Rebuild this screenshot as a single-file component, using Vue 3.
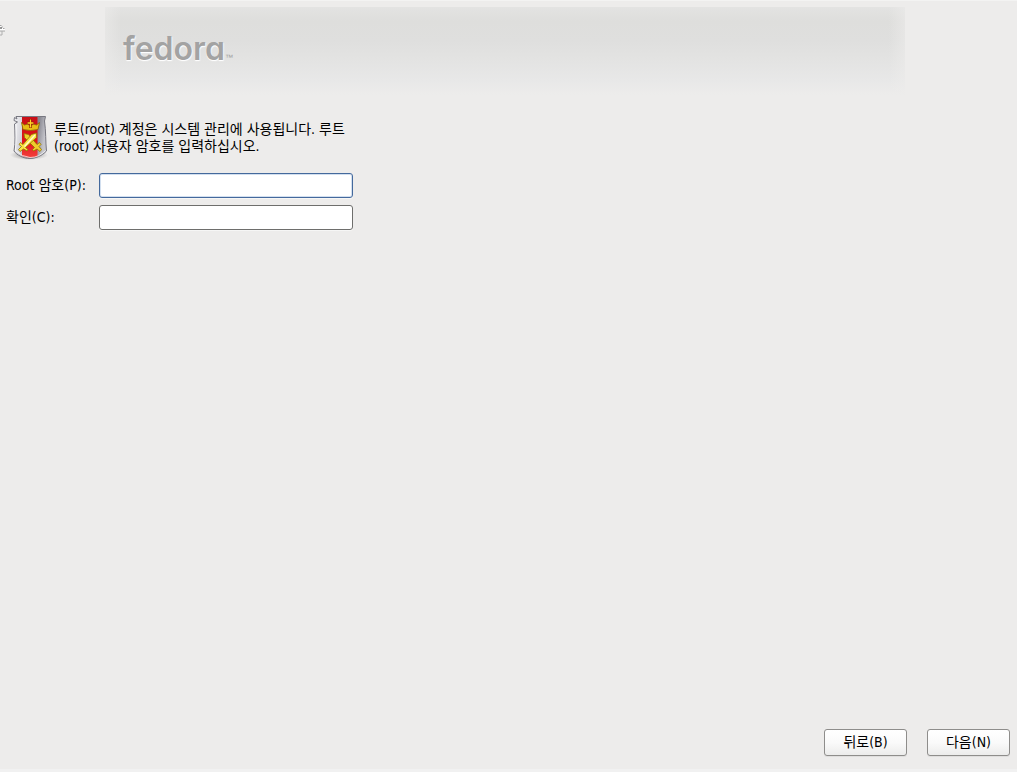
<template>
  <div class="installer">
    <svg class="pointer" width="6" height="16" viewBox="0 0 6 16" aria-hidden="true">
      <path d="M0 3h1v1h1v1h1v1h1v1h1v2H0z" fill="#fff" />
      <path d="M0 3.500h1.500M1.500 5h1.500M3 6.500h1.500M0 9h5" stroke="#a4a4a4" fill="none" />
      <path d="M0 6h2" stroke="#333" />
      <path d="M2 9v4H0" stroke="#b0b0b0" fill="none" />
    </svg>

    <header class="banner">
      <span class="logo">fedora</span><span class="tm">™</span>
    </header>

    <form id="root-form" class="content" @submit.prevent>
      <div class="intro">
        <svg class="shield" width="40" height="48" viewBox="0 0 40 48" aria-hidden="true">
          <defs>
            <linearGradient id="silver" x1="0" y1="0" x2="1" y2="0.2">
              <stop offset="0" stop-color="#f4f4f6" />
              <stop offset="0.3" stop-color="#d4d4da" />
              <stop offset="0.75" stop-color="#85858e" />
              <stop offset="1" stop-color="#c4c4ca" />
            </linearGradient>
            <linearGradient id="red" x1="0" y1="0" x2="0" y2="1">
              <stop offset="0" stop-color="#c90f16" />
              <stop offset="0.6" stop-color="#e0141a" />
              <stop offset="1" stop-color="#f3403c" />
            </linearGradient>
            <radialGradient id="shade">
              <stop offset="0" stop-color="#000" stop-opacity="0.4" />
              <stop offset="1" stop-color="#000" stop-opacity="0" />
            </radialGradient>
          </defs>
          <ellipse cx="20" cy="42" rx="19" ry="5" fill="url(#shade)" />
          <path d="M7 3.500H36.500L35.500 8C37 18 36.500 29 37.500 38C33 43 26 45.500 21 45.500C14 45.500 8 42 5 38C6.500 30 6 20 5.500 11L8.500 9L5 7.500L5.500 4.500L8 6Z" fill="url(#silver)" stroke="#777780" />
          <path d="M13 4H28.500V43.500Q21 46 13 43Z" fill="url(#red)" />
          <path d="M7 11Q7.500 25 6.500 37.500Q13 44 21 44.500Q30 44.500 36.500 37.500" fill="none" stroke="#fff" stroke-opacity="0.7" />
          <path d="M12.500 9.500L15.500 12L18.500 11L21.500 13L24.500 11L27.500 12L30.500 9.500L29 16.500Q21.500 18.500 14 16.500Z" fill="#e9bd15" stroke="#8a6305" stroke-width="0.8" />
          <path d="M21.500 6V15M18 10H25" stroke="#8f1200" stroke-width="2.400" />
          <path d="M21.500 6.500V14.500M18.500 10H24.500" stroke="#ffd52b" stroke-width="1.300" />
          <g stroke="#8f7300" stroke-width="0.8" stroke-linejoin="round">
            <path d="M15 20.500L19.500 21.500L28 31.500L30.500 29.500L32 31.500L30 33.500L32.500 36.500L31 38.500L28 36L24.500 38L23.500 36.500L25.500 34.500L15.500 24.500Z" fill="#efcd2c" />
            <path d="M27.500 20L22.500 21.500L14 31.500L11.500 29.500L10 31.500L12.500 33.500L9.500 36.500L11 38.500L14.500 36L18 38L19 36.500L16.500 34.500L27.500 24.500Z" fill="#fbe244" />
          </g>
          <path d="M26 22L15.500 33.500" stroke="#fffbd0" stroke-width="1.200" />
        </svg>
        <p>루트(root) 계정은 시스템 관리에 사용됩니다. 루트(root) 사용자 암호를 입력하십시오.</p>
      </div>

      <div class="field">
        <label for="password">Root 암호(P):</label>
        <input id="password" v-model="password" class="focused" type="password">
      </div>
      <div class="field">
        <label for="confirm">확인(C):</label>
        <input id="confirm" v-model="confirm" type="password">
      </div>
    </form>

    <footer class="actions">
      <button type="button">뒤로(B)</button>
      <button type="submit" form="root-form">다음(N)</button>
    </footer>
  </div>
</template>

<script setup>
import { ref } from 'vue';

const password = ref('');
const confirm = ref('');
</script>

<style>
body {
  margin: 0;
  background: #edeceb;
}
</style>

<style scoped>
.installer {
  position: relative;
  box-sizing: border-box;
  display: flex;
  flex-direction: column;
  min-height: 100vh;
  padding: 6px 7px 0 0;
  border-top: 1px solid #f3f3f2;
  border-bottom: 3px solid #f1f1f1;
  background: #edeceb;
  color: #000;
  font: 14px/17px "DejaVu Sans Condensed", "Noto Sans CJK KR", sans-serif;
}

.pointer {
  position: absolute;
  top: 21px;
  left: 0;
}

.banner {
  box-sizing: border-box;
  width: 100%;
  max-width: 800px;
  height: 88px;
  margin: 0 auto;
  padding: 20px 18px 0;
  background:
    linear-gradient(to right, #edeceb90, #edeceb00 16px, #edeceb00 calc(100% - 16px), #edeceb90),
    linear-gradient(#e3e3e2, #dededc 14px, #dfdfde 34px, #e3e3e2 52px, #e8e8e8 74px, #edeceb);
}

.logo {
  color: #a3a3a3;
  font: 600 32px/44px Inter, sans-serif;
  font-feature-settings: "cv11";
  text-shadow: 0 1px 1px #fff, 1px 1px 1px #f4f4f4;
}

.tm {
  color: #a0a0a0;
  font: 8px "Liberation Sans", sans-serif;
}

.content {
  width: 347px;
  max-width: 100%;
  margin-top: 18px;
  padding-left: 6px;
}

.intro {
  display: flex;
  gap: 5px;
  margin-bottom: 12px;
}

.shield {
  flex: none;
  margin-left: 3px;
}

.intro p {
  margin: 8px 0 0;
}

.field {
  display: flex;
  align-items: center;
  margin-bottom: 7px;
}

.field label {
  width: 93px;
}

.field input {
  box-sizing: border-box;
  flex: 1;
  min-width: 0;
  height: 25px;
  padding: 3px 6px;
  border: 1px solid #6e6e6c;
  border-radius: 3px;
  outline: none;
  background: #fff;
  box-shadow: 0 1px #f6f6f5;
  font: inherit;
}

.field input.focused {
  border-color: #44699c;
  box-shadow: inset 0 0 0 1px #d2dfef, 0 1px #f6f6f5;
}

.actions {
  display: flex;
  justify-content: flex-end;
  gap: 20px;
  margin-top: auto;
  padding-bottom: 13px;
}

.actions button {
  width: 83px;
  height: 27px;
  padding: 0;
  border: 1px solid #8e8d8b;
  border-radius: 3px;
  background: linear-gradient(#fff, #fafafa 50%, #ececeb);
  box-shadow: 0 1px #dfdedd;
  color: #000;
  font: inherit;
}
</style>
